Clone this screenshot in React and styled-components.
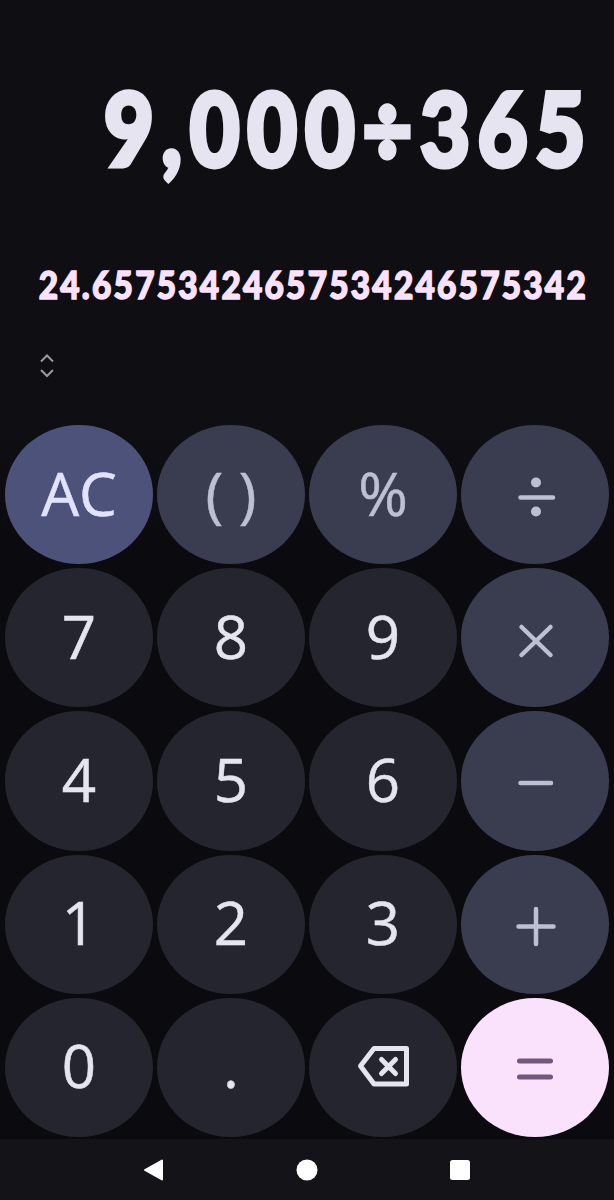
import React from "react";
import styled, { createGlobalStyle } from "styled-components";

const Global = createGlobalStyle`
  html, body { margin: 0; padding: 0; background: #0e0e13; }
  body { font-family: "Open Sans", "Lato", sans-serif; }
`;

const Screen = styled.div`
  width: 614px;
  height: 1200px;
  display: flex;
  flex-direction: column;
  overflow: hidden;
  background: #0e0e13;
`;

const Display = styled.section`
  height: 425px;
  box-sizing: border-box;
  padding: 72px 28px 0 38px;
  display: flex;
  flex-direction: column;
`;

const Expression = styled.div`
  height: 112px;
  line-height: 110px;
  display: flex;
  justify-content: flex-end;
  white-space: nowrap;
  margin-right: -7px;
  font-family: "Lato", sans-serif;
  font-weight: 900;
  font-size: 101px;
  letter-spacing: 9.200px;
  color: #e5e4f0;
  -webkit-text-stroke: 5px #e5e4f0;
  transform: scaleX(0.85);
  transform-origin: right center;
`;

const Result = styled.div`
  margin-top: 77px;
  height: 48px;
  line-height: 48px;
  display: flex;
  justify-content: flex-end;
  white-space: nowrap;
  margin-right: -2px;
  font-family: "Lato", sans-serif;
  font-weight: 900;
  font-size: 37px;
  letter-spacing: 2.500px;
  color: #fae2fd;
  -webkit-text-stroke: 1.500px #fae2fd;
  transform: scaleX(0.9);
  transform-origin: right center;
`;

const Expand = styled.div`
  margin: 44px 0 0 0;
  width: 18px;
  color: #9a9aa2;
  display: flex;
`;

const Keypad = styled.main`
  flex: 1;
  box-sizing: border-box;
  padding: 0 5px 2px;
  display: grid;
  grid-template-columns: repeat(4, 148px);
  grid-auto-rows: 139.2px;
  gap: 4px;
  background: linear-gradient(#0e0e13, #0b0b0f 120px);
`;

const tones = {
  num: ["#24252e", "#e5e4f0"],
  op: ["#3a3d50", "#bdbfd2"],
  clear: ["#4c5279", "#e2e3fb"],
  eq: ["#fae2fd", "#75567c"],
};

const Key = styled.button`
  border: 0;
  padding: 0 0 4px;
  margin: 0;
  border-radius: 50%;
  display: flex;
  align-items: center;
  justify-content: center;
  font-family: "Open Sans", sans-serif;
  font-weight: 400;
  font-size: 60px;
  line-height: 1;
  -webkit-text-stroke: 0.5px currentColor;
  background: ${(p) => tones[p.$tone][0]};
  color: ${(p) => tones[p.$tone][1]};
`;

const NavBar = styled.nav`
  height: 61px;
  background: #131318;
  display: grid;
  grid-template-columns: 1fr 1fr 1fr;
  width: 459px;
  padding: 0 78px 0 77px;
  align-items: center;
  justify-items: center;
  color: #fff;
`;

const Op = ({ children, sw = 4.5 }) => (
  <svg width="60" height="60" viewBox="0 0 60 60" fill="none" stroke="currentColor" strokeWidth={sw} strokeLinecap="round">
    {children}
  </svg>
);

const Divide = () => (
  <Op>
    <path d="M15.500 34.500H48" />
    <circle cx="31" cy="19.500" r="5" fill="currentColor" stroke="none" />
    <circle cx="31" cy="48.500" r="5" fill="currentColor" stroke="none" />
  </Op>
);
const Times = () => <Op><path d="M16.500 21L45.500 49M45.500 21L16.500 49" /></Op>;
const Minus = () => <Op><path d="M15.500 34H46" /></Op>;
const Plus = () => <Op><path d="M13.500 34.500H48.500M31 17V52" /></Op>;
const Equals = () => <Op sw={5}><path d="M14.500 26H45.500M14.500 42H45.500" /></Op>;
const Backspace = () => (
  <svg width="52" height="42" viewBox="0 0 52 42" fill="none" stroke="currentColor" strokeWidth="5" strokeLinejoin="round" strokeLinecap="round" style={{ marginTop: 2 }}>
    <path d="M17 3.500H49.500V39H17L3.500 21Z" />
    <path d="M24.500 14.500L38.500 28.500M38.500 14.500L24.500 28.500" />
  </svg>
);

const keys = [
  ["AC", "clear"], ["( )", "op"], ["%", "op"], [<Divide />, "op"],
  ["7", "num"], ["8", "num"], ["9", "num"], [<Times />, "op"],
  ["4", "num"], ["5", "num"], ["6", "num"], [<Minus />, "op"],
  ["1", "num"], ["2", "num"], ["3", "num"], [<Plus />, "op"],
  ["0", "num"], [".", "num"], [<Backspace />, "num"], [<Equals />, "eq"],
];

export default function App() {
  return (
    <Screen>
      <Global />
      <Display>
        <Expression>9,000÷365</Expression>
        <Result>24.65753424657534246575342</Result>
        <Expand>
          <svg width="18" height="26" viewBox="0 0 18 26" fill="none" stroke="currentColor" strokeWidth="2">
            <path d="M3 8.500L9 2.500L15 8.500M3 17L9 23L15 17" />
          </svg>
        </Expand>
      </Display>
      <Keypad>
        {keys.map(([label, tone], i) => (
          <Key key={i} $tone={tone}>{label}</Key>
        ))}
      </Keypad>
      <NavBar>
        <svg width="22" height="24" viewBox="0 0 22 24" fill="#fff"><path d="M19 2.500V21.500L2 12Z" stroke="#fff" strokeWidth="2" strokeLinejoin="round" /></svg>
        <svg width="22" height="22" viewBox="0 0 22 22" fill="#fff"><circle cx="11" cy="11" r="10.500" /></svg>
        <svg width="20" height="20" viewBox="0 0 20 20" fill="#fff"><rect width="20" height="20" rx="2.500" /></svg>
      </NavBar>
    </Screen>
  );
}
